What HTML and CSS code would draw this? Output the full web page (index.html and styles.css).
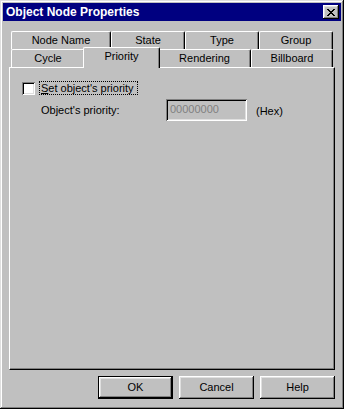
FILE: index.html
```html
<!DOCTYPE html>
<html>
<head>
<meta charset="utf-8">
<link rel="stylesheet" href="styles.css">
</head>
<body>
<div class="window">
  <div class="titlebar">
    <span class="title">Object Node Properties</span>
    <div class="close">
      <svg width="8" height="7" viewBox="0 0 8 7" shape-rendering="crispEdges"><path fill="#000" d="M0 0h2v1H0zM6 0h2v1H6zM1 1h2v1H1zM5 1h2v1H5zM2 2h4v1H2zM3 3h2v1H3zM2 4h4v1H2zM1 5h2v1H1zM5 5h2v1H5zM0 6h2v1H0zM6 6h2v1H6z"/></svg>
    </div>
  </div>
  <div class="content">
    <div class="tabs">
      <div class="tabrow">
        <div class="tab t-node">Node Name</div>
        <div class="tab t-state">State</div>
        <div class="tab t-type">Type</div>
        <div class="tab t-group">Group</div>
      </div>
      <div class="tabrow">
        <div class="tab t-cycle">Cycle</div>
        <div class="tab t-priority selected">Priority</div>
        <div class="tab t-render">Rendering</div>
        <div class="tab t-bill">Billboard</div>
      </div>
    </div>
    <div class="panel">
      <div class="row-check">
        <div class="checkbox"></div>
        <div class="focus"><u>S</u>et object's priority</div>
      </div>
      <div class="row-field">
        <div class="field-label">Object's priority:</div>
        <div class="edit">00000000</div>
        <div class="hex">(Hex)</div>
      </div>
    </div>
    <div class="buttons">
      <div class="btn default">OK</div>
      <div class="btn">Cancel</div>
      <div class="btn">Help</div>
    </div>
  </div>
</div>
</body>
</html>
```

FILE: styles.css
```css
* { box-sizing: border-box; }
html, body {
  margin: 0;
  padding: 0;
  background: #c0c0c0;
}
body {
  font-family: "Liberation Sans", Arial, sans-serif;
  font-size: 11px;
  color: #000;
}
.window {
  width: 344px;
  height: 409px;
  padding: 3px;
  background: #c0c0c0;
  box-shadow: inset -1px -1px #000, inset 1px 1px #dfdfdf, inset -2px -2px #808080, inset 2px 2px #fff;
}
.titlebar {
  height: 18px;
  background: #000080;
  display: flex;
  align-items: center;
  justify-content: space-between;
  padding: 0 2px 0 3px;
}
.title {
  color: #fff;
  font-weight: bold;
  font-size: 12px;
  line-height: 18px;
}
.close {
  width: 16px;
  height: 14px;
  background: #c0c0c0;
  box-shadow: inset -1px -1px #000, inset 1px 1px #fff, inset -2px -2px #808080, inset 2px 2px #dfdfdf;
  padding: 4px 0 0 4px;
  line-height: 0;
}
.close svg { display: block; }
.content {
  padding: 10px 6px 0 6px;
}
.tabs {
  padding-left: 2px;
  position: relative;
  z-index: 2;
}
.tabrow {
  display: flex;
  align-items: flex-end;
  height: 18px;
}
.tab {
  height: 18px;
  background: #c0c0c0;
  border-top: 1px solid #fff;
  border-left: 1px solid #fff;
  border-right: 1px solid #000;
  border-radius: 2px 2px 0 0;
  box-shadow: inset -1px 0 #808080;
  text-align: center;
  line-height: 17px;
  flex: none;
}
.t-node { width: 100px; }
.t-state { width: 74px; }
.t-type { width: 74px; }
.t-group { width: 74px; }
.t-cycle { width: 74px; }
.t-priority { width: 73px; }
.t-render { width: 93px; }
.t-bill { width: 82px; }
.tab.selected {
  width: 77px;
  height: 21px;
  margin: -2px -2px -1px -2px;
  position: relative;
  z-index: 3;
  line-height: 17px;
}
.panel {
  height: 303px;
  position: relative;
  z-index: 1;
  border-top: 1px solid #fff;
  border-left: 1px solid #fff;
  border-right: 1px solid #000;
  border-bottom: 1px solid #000;
  box-shadow: inset -1px -1px #808080;
  padding: 13px 0 0 12px;
}
.row-check {
  display: flex;
  align-items: center;
  height: 14px;
}
.checkbox {
  width: 13px;
  height: 13px;
  margin-top: 1px;
  background: #fff;
  box-shadow: inset 1px 1px #808080, inset -1px -1px #fff, inset 2px 2px #000, inset -2px -2px #dfdfdf;
}
.focus {
  margin-left: 4px;
  height: 14px;
  border: 1px dotted #000;
  padding: 0 3px 0 1px;
  line-height: 12px;
}
.focus u { text-decoration: underline; text-underline-offset: 1px; }
.row-field {
  display: flex;
  align-items: center;
  margin-top: 4px;
  margin-left: 19px;
  height: 22px;
}
.field-label {
  width: 125px;
}
.edit {
  width: 81px;
  height: 22px;
  background: #c0c0c0;
  color: #808080;
  box-shadow: inset 1px 1px #808080, inset -1px -1px #fff, inset 2px 2px #000, inset -2px -2px #dfdfdf;
  padding: 0 0 0 4px;
  line-height: 21px;
}
.hex {
  margin-left: 9px;
  margin-top: 2px;
}
.buttons {
  display: flex;
  justify-content: flex-end;
  gap: 6px;
  margin-top: 6px;
}
.btn {
  width: 75px;
  height: 23px;
  background: #c0c0c0;
  box-shadow: inset -1px -1px #000, inset 1px 1px #fff, inset -2px -2px #808080, inset 2px 2px #dfdfdf;
  text-align: center;
  line-height: 22px;
}
.btn.default {
  border: 1px solid #000;
  line-height: 20px;
}
```
